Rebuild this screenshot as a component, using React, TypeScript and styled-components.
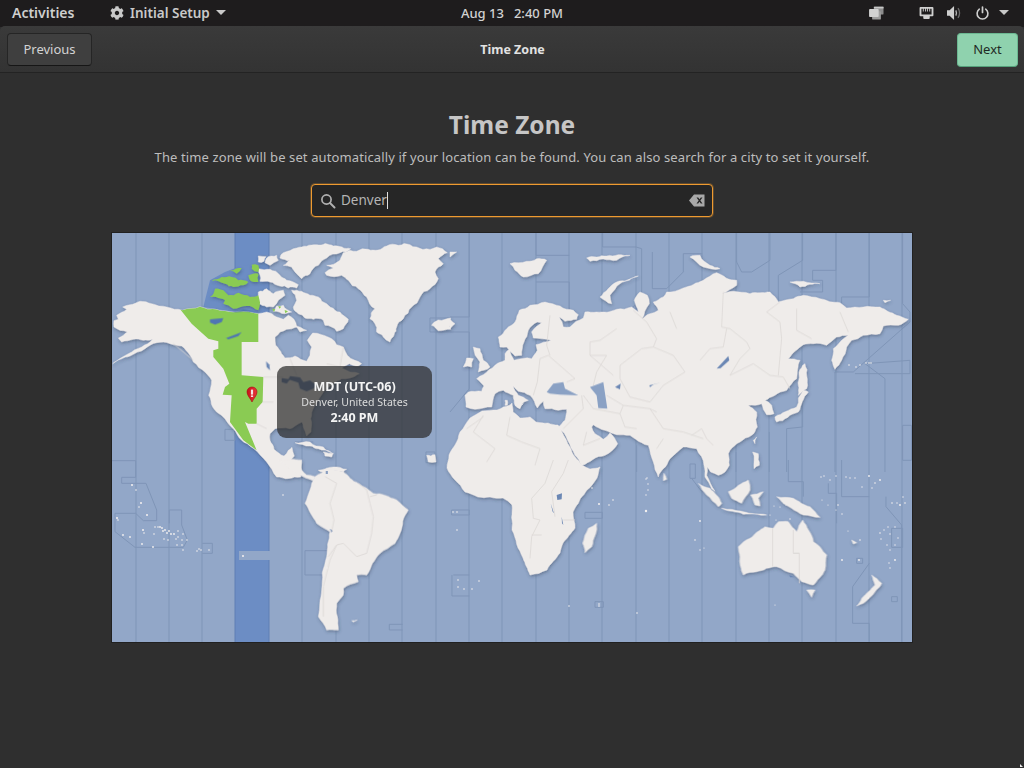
import React from "react";
import styled, { createGlobalStyle } from "styled-components";
import { FaCog } from "react-icons/fa";

const Global = createGlobalStyle`
  html, body { margin: 0; padding: 0; background: #2f2f2f; }
  body { font-family: "Noto Sans", "Open Sans", sans-serif; overflow: hidden; }
`;

const Page = styled.div`
  position: relative; width: 1024px; height: 768px; display: flex; flex-direction: column; background: #2f2f2f; overflow: hidden;
`;
const TopBar = styled.header`
  height: 27px; flex: none; box-sizing: border-box; padding-bottom: 2px; background: #1e1c1d; color: #cfcfcf; display: grid;
  grid-template-columns: 1fr auto 1fr; align-items: center;
  font-size: 14px; font-weight: 600;
`;
const TopLeft = styled.div`display: flex; align-items: center; padding-left: 12px;`;
const Activities = styled.span`width: 98px;`;
const AppMenu = styled.span`display: flex; align-items: center; gap: 6px; color: #c9c9c9; font-size: 13.5px;`;
const Clock = styled.div`display: flex; gap: 10px; font-size: 13px; font-weight: 500; color: #d2d2d2;`;
const TopRight = styled.div`display: flex; align-items: center; justify-content: flex-end; padding-right: 15px; color: #c8c8c8;`;
const Tray = styled.span<{ $gap?: number }>`display: flex; margin-right: ${p => p.$gap ?? 0}px;`;
const Caret = styled.span`
  width: 0; height: 0; border-left: 5px solid transparent; border-right: 5px solid transparent;
  border-top: 5px solid currentColor; display: block;
`;
const HeaderBar = styled.div`
  height: 46px; flex: none; display: grid; grid-template-columns: 1fr auto 1fr; align-items: start;
  padding: 0 6px 0 7px; background: linear-gradient(#3a3a3a, #333333); border-radius: 5px 5px 0 0;
  margin-top: -1px; border-bottom: 1px solid #232323; box-sizing: content-box;
`;
const Title = styled.div`color: #e2e2e2; font-size: 12.5px; line-height: 46px; font-weight: 700; margin-top: 1px;`;
const PrevButton = styled.button`
  justify-self: start; margin-top: 7px; width: 85px; height: 33px; border: 1px solid #252525; border-bottom-color: #161616; border-radius: 4px;
  background: #3f3f3f; color: #d3d3d3; font: 400 13px "Noto Sans", sans-serif; padding: 0 0 2px;
`;
const NextButton = styled.button`
  justify-self: end; margin-top: 7px; width: 61px; height: 34px; border: 1px solid #6cb892; border-bottom-color: #55a17b; border-radius: 4px;
  background: #8fd2ae; color: #1f2a25; font: 400 13px "Noto Sans", sans-serif; padding: 0 0 2px;
`;
const Main = styled.main`
  flex: 1; display: flex; flex-direction: column; align-items: center; padding-top: 33px; background: #2f2f2f;
`;
const Heading = styled.h1`
  margin: 0; font-size: 24.5px; line-height: 38px; font-weight: 700; color: #c6c6c6;
`;
const Sub = styled.p`
  margin: 3px 0 0; font-size: 13px; line-height: 20px; color: #bdbdbd; letter-spacing: 0.115px;
`;
const SearchBox = styled.div`
  margin-top: 17px; width: 402px; height: 33px; box-sizing: border-box; border: 1px solid #ee9a30; border-radius: 4px;
  background: #262626; display: flex; align-items: center; padding: 0 7px 0 8px; color: #b3b3b3;
  box-shadow: 0 0 0 1px rgba(238,154,48,.25);
`;
const SearchText = styled.span`
  margin-left: 5px; flex: 1; font-size: 13.5px; color: #b5b5b5; display: flex; align-items: center; padding-bottom: 1px;
`;
const Cursor = styled.i`display: inline-block; width: 1px; height: 17px; background: #e0e0e0;`;
const MapFrame = styled.div`
  position: relative; margin-top: 16px; width: 800px; height: 409px; background: #92a7c8;
  box-shadow: 0 0 0 1px rgba(0,0,0,.28);
`;
const MapSvg = styled.svg`display: block; width: 800px; height: 409px;`;
const ZoneLine = styled.path`fill: none; stroke: #7f95b7; stroke-width: 1; vector-effect: non-scaling-stroke;`;
const Band = styled.path`fill: #6c8dc4;`;
const BandLine = styled.path`fill: none; stroke: #5f7fb4; stroke-width: 1; vector-effect: non-scaling-stroke;`;
const OceanPatch = styled.path`fill: #92a7c8;`;
const Land = styled.path`fill: #efecea; stroke: #efecea; stroke-width: .4; stroke-linejoin: round; vector-effect: non-scaling-stroke;`;
const Zone = styled.path`fill: #8acb53;`;
const Water = styled.path`fill: #6b87b4;`;
const Sea = styled.path`fill: #8aa1c4;`;
const ZoneWater = styled.path`fill: #4f75b3;`;
const Border = styled.path`fill: none; stroke: #dcd8d6; stroke-width: .8; stroke-linejoin: round; vector-effect: non-scaling-stroke;`;
const Islet = styled.circle`fill: #f4f1f0;`;
const Tip = styled.div`
  position: absolute; left: 165px; top: 133px; width: 155px; height: 72px; border-radius: 9px;
  background: rgba(45,45,45,.72); color: #f2f2f2; display: flex; flex-direction: column; align-items: center; justify-content: center;
`;
const TipStrong = styled.div`font-size: 12.5px; line-height: 16px; font-weight: 700; color: #f4f4f4;`;
const TipLight = styled.div`font-size: 10.6px; line-height: 15px; color: #dcdcdc;`;
const Pointer = styled.svg`position: absolute; left: 1020px; top: 764px;`;

/* Midpoint displacement: turns the hand-traced outlines into coast-like edges. */
const noise = (x: number, y: number) => {
  const s = Math.sin(x * 12.9898 + y * 78.233) * 43758.5453;
  return s - Math.floor(s);
};
type Pt = [number, number];
const split = (a: Pt, b: Pt, min: number, amp: number): Pt[] => {
  const dx = b[0] - a[0], dy = b[1] - a[1];
  const len = Math.hypot(dx, dy);
  if (len < min) return [a];
  const k = (noise(a[0] + b[0], a[1] + b[1]) - 0.5) * amp;
  const m: Pt = [(a[0] + b[0]) / 2 - dy * k, (a[1] + b[1]) / 2 + dx * k];
  return [...split(a, m, min, amp), ...split(m, b, min, amp)];
};
const rough = (d: string, min = 9, amp = 0.24): string => {
  const n = (d.match(/-?\d+(\.\d+)?/g) || []).map(Number);
  const pts: Pt[] = [];
  for (let i = 0; i < n.length; i += 2) pts.push([n[i], n[i + 1]]);
  const out: Pt[] = [];
  pts.forEach((p, i) => out.push(...split(p, pts[(i + 1) % pts.length], min, amp)));
  return "M" + out.map(p => `${p[0].toFixed(1)},${p[1].toFixed(1)}`).join("L") + "Z";
};

const vLines = [136, 169, 202, 302, 336, 369, 402, 436, 469, 502, 536, 569, 602, 636, 669, 702, 736, 769, 802, 836, 869, 902];

const zoneZ5 = [
  "M258,0V70H358 M258,150H358V260", "M458,0V45H558L575,50V200L545,230", "M607,60V170H650L700,120V65H757",
  "M860,0V90L875,120H905L960,85V0", "M1058,0V85L985,130V205", "M1158,0V115H1088V145H1118V180H1050",
  "M1258,0V195H1175V215", "M1358,0V215L1380,240V270L1210,420H1155V720", "M1245,395L1380,385V425H1215",
  "M1245,395L1305,440V720", "M1010,720V590L1058,585V500", "M58,0V255H0 M58,300V470L0,540 M0,300H58",
  "M1358,580H1385V685H1358V580", "M958,720V600 M858,720V660 M560,720V640",
];
const zoneZ6 = [
  "M5,2H77V52H35V70H108L140,150V182H100L77,160H15V215L75,262H220L232,240L215,195V150H178V190",
  "M277,250H307V280H277", "M585,272H660 M585,272V345H645", "M1030,345H1078 M1026,345V408H1078",
  "M1025,150H1078V165H1025Z", "M838,493H878 M838,493V510H878", "M5,685H77V545", "M5,580H77",
];
const zoneZ7 = [
  "M225,157H277V175H225Z", "M255,425H280V442H255Z", "M540,12H556V55L540,55Z", "M545,55L575,95", "M1040,295H1058V310H1040Z",
  "M1145,410H1162V425H1145Z", "M1078,310L1028,380V490H1078V545", "M1128,110V140L1175,195V545", "M995,0V110H1078",
  "M1145,205H1178V262H1145Z", "M955,70V100H980V190", "M835,0V65H880V110",
];

const mainland = rough("M12,266L25,262L20,250L50,232L38,225L60,218L90,208L125,215L170,225L217,235L270,224L300,232L360,240L445,245L470,240L500,255L520,262L535,250L552,262L560,285L530,292L510,300L495,315L497,340L515,365L525,378L555,372L590,388L600,370L605,345L592,325L608,303L635,308L665,320L680,338L700,345L712,370L735,385L755,395L745,402L718,395L695,408L720,420L748,425L720,438L695,440L670,455L640,480L625,505L612,525L602,560L603,600L590,612L580,585L576,570L555,582L540,590L515,588L495,590L480,605L480,625L492,652L522,672L535,655L546,646L553,672L540,688L525,695L550,706L572,712L572,735L500,735L470,690L432,650L412,635L395,625L370,590L345,560L320,540L308,525L296,490L305,445L285,420L250,390L240,370L215,342L180,335L140,332L105,350L60,372L8,395L55,365L95,345L128,322L100,325L70,322L35,330L25,318L52,300L12,285Z", 14, 0.16);
const naLand = [
  "M520,62L560,48L620,38L670,42L722,50L690,62L650,78L625,100L600,125L575,140L560,125L545,105L520,100L540,85L510,78Z",
  "M470,78L500,70L505,85L480,100L465,92Z", "M445,72L468,74L462,88L445,90Z",
  "M445,110L480,112L510,130L530,145L565,158L560,168L510,162L480,150L450,148Z",
  "M545,175L575,178L600,190L625,195L650,215L675,235L690,240L715,262L700,290L680,298L665,285L645,280L640,265L610,262L585,258L565,245L550,225L560,205Z",
  "M445,180L470,170L490,185L520,175L525,190L505,205L490,225L470,225L445,215Z",
  "M520,220L545,240L525,245L490,238L500,222Z", "M555,280L590,295L570,300Z",
  "M645,122L670,108L650,100L690,85L700,62L740,58L775,52L830,42L900,38L980,45L1012,62L985,80L1000,95L975,120L985,140L960,170L930,195L905,225L880,260L860,285L840,330L820,315L800,300L795,275L780,260L795,230L770,195L745,170L715,145L695,130L650,130Z",
  "M965,280L985,264L1022,258L1022,292L985,296Z",
  "M555,632L600,630L640,645L665,662L625,650L600,642Z", "M640,660L670,664L665,675L645,672Z", "M950,670L975,668L978,690L955,690Z",
  "M625,715L670,705L710,712L700,720L640,720Z",
].map(d => rough(d, 12, 0.28));
const naGreenIsles = [
  "M305,148L335,135L365,135L385,145L415,150L400,160L370,165L345,155Z",
  "M300,195L315,170L340,175L355,190L385,182L420,195L445,190L445,235L410,222L370,230L340,215L345,205L318,195Z",
  "M360,115L395,108L380,125Z", "M425,98L445,100L445,120L425,110Z", "M415,130L445,125L445,150L420,145Z",
  "M486,230L496,232L492,240Z", "M505,222L514,224L508,230Z", "M524,234L534,238L526,244Z",
].map(d => rough(d, 12, 0.28));
const mdtZone = "M205,225L280,210L445,225V330H395V430L460,435L458,510L440,530V575L415,575L405,570L440,655L400,625L360,570L365,490L338,488L345,465L358,455L340,410L310,375V355L325,350V328L295,320L245,275Z";
const naWater = [
  "M540,432L570,436L580,450L600,445L620,460L610,470L590,478L570,470L565,452L535,442Z", "M515,438L540,442L530,455L515,450Z",
  "M468,388L478,398L480,415L470,405Z",
];

const eurasia = rough("M48,525L45,490L55,480L95,478L102,462L80,440L100,428L135,400L165,385L165,365L178,352L192,385L245,380L262,355L258,338L303,325L250,318L245,300L275,272L262,270L235,295L222,330L215,370L195,372L170,345L150,345L145,315L170,290L195,270L208,235L240,220L285,210L330,222L370,235L385,248L380,262L345,268L328,255L340,285L360,285L400,258L405,240L440,240L500,232L545,225L565,240L553,205L570,180L592,190L598,215L575,262L600,245L625,235L610,210L640,195L650,180L700,168L760,145L800,122L860,145L860,160L815,185L850,178L900,185L960,180L985,210L1030,200L1060,190L1110,200L1170,212L1190,228L1240,225L1290,225L1340,250L1375,262L1345,280L1300,282L1290,305L1240,310L1205,325L1190,345L1175,385L1155,412L1145,385L1150,350L1175,325L1195,310L1160,315L1130,340L1090,335L1060,338L1015,380L1050,385L1040,440L1010,475L975,490L945,505L965,520L972,545L950,548L935,515L895,520L920,540L922,585L905,610L870,630L840,655L835,665L838,700L825,720L805,730L782,720L772,705L770,730L795,778L785,770L765,735L762,700L740,650L700,645L660,680L640,710L625,735L610,690L595,640L575,632L540,610L500,608L465,595L430,578L425,585L435,605L460,622L480,603L503,635L465,670L395,700L375,670L325,585L345,565L350,532L325,535L285,530L280,508L262,528L240,490L205,478L190,462L205,490L235,505L222,510L210,525L195,520L190,490L160,475L135,485L125,525L75,532Z", 14, 0.16);
const z5Isles = [
  "M40,405L50,378L70,380L65,405Z", "M70,345L90,350L100,385L120,405L85,420L90,390Z", "M180,95L230,88L290,85L265,125L220,135L195,115Z", "M410,78L470,72L540,70L500,85L420,88Z",
  "M720,75L750,70L780,100L810,110L760,105Z", "M450,195L500,150L565,132L510,155L480,190L485,215Z", "M1020,150L1060,148L1110,155L1050,165Z", "M1300,205L1322,205L1305,212Z",
  "M1045,460L1058,400L1065,395L1070,470L1045,490Z", "M975,555L1040,525L1060,475L1075,480L1045,540L980,570Z", "M165,505L172,505L172,520L165,520Z", "M195,520L220,515L210,530Z",
  "M908,660L925,665L928,700L912,710Z", "M910,625L920,615L915,635Z", "M0,60L20,60L0,75Z", "M0,262L15,275L0,290Z",
].map(d => rough(d, 14, 0.22));
const z5Sea = [
  "M290,480L310,455L340,450L345,470L385,490L330,488L300,485Z", "M420,465L460,450L472,530L445,528L440,490Z",
];
const z5Water = [
  "M800,410L835,372L838,385L812,408Z", "M598,460L632,452L610,458L600,465Z", "M495,465L512,455L510,472Z",
];
const z7Isles = [
  "M685,260L720,235L765,200L790,205L805,185L835,185L860,215L878,180L910,245L950,285L945,330L910,375L875,365L850,340L800,320L740,335L700,345L690,290Z",
  "M890,390L915,390L905,412Z", "M260,190L245,260L225,278L218,250L235,205Z", "M655,95L715,60L720,90L695,130L665,115Z",
  "M565,70L600,85L635,130L625,140L590,105Z", "M635,145L700,155L770,165L700,163Z", "M800,110L850,115L900,140L930,172L880,165L845,145L815,125Z",
  "M722,105L760,95L745,115L750,138L735,135L728,115Z", "M1085,345L1115,370L1095,395L1060,430L1040,438L1075,395L1095,375Z", "M462,40L470,58L460,62Z",
  "M1025,240L1040,248L1030,252Z",
].map(d => rough(d, 14, 0.14));
const z6Land = [
  "M650,25L700,35L745,70L790,100L860,120L895,150L870,220L855,250L810,280L770,345L740,345L745,365L700,385L700,405L680,430L685,510L650,510L625,470L635,390L650,290L660,215L620,190L585,130L600,90L615,50Z",
  "M505,0L575,0L575,30L590,45L615,50L610,62L580,50L545,30Z", "M725,482L742,480L730,486Z",
].map(d => rough(d, 14, 0.12));

const africa = rough("M470,418L482,411L497,410L510,405L512,403L513,412L520,418L530,417L536,422L548,423L558,425L562,432L570,447L582,465L590,469L600,467L597,478L587,490L575,508L573,512L575,528L563,543L560,553L547,570L530,575L523,558L512,530L512,505L503,498L490,497L478,497L465,492L455,480L447,468L449,455L455,445L460,432Z", 4.5, 0.12);

const dots: [number, number, number][] = [
  [132,485,1],[136,490,.8],[141,503,1],[139,507,.8],[147,515,1],[117,518,1],[118,520,.8],[123,535,.9],[130,537,.9],[142,544,.9],[153,547,.9],[143,530,1],[144,533,.8],
  [155,527,.8],[158,527,.8],[160,527,.9],[162,528,.9],[163,531,.9],[165,530,.9],[167,533,.9],[169,531,.9],[171,534,.9],[174,534,.9],[178,531,.8],[178,537,.8],[183,534,.8],[182,540,.8],[187,540,.8],[176,539,.8],[164,539,.8],[168,540,.8],[177,545,.8],[182,545,.8],[183,550,.8],[154,534,.8],[199,549,.8],[197,551,.8],[201,550,.8],[209,550,.8],[243,556,1],
  [283,495,.8],[327,568,.7],[453,512,.8],[457,512,.8],[458,580,.8],[457,530,.8],[458,587,.8],[479,581,.8],[464,589,.8],[472,589,.8],[592,488,.8],[599,504,1],[609,505,.8],[613,500,.8],[646,479,.7],[648,484,.7],[648,490,.7],[646,495,.7],[647,478,.7],
  [646,511,1.2],[700,521,.9],[842,560,.9],[859,560,.9],[895,560,.9],[900,505,.9],[892,503,.8],[880,480,.9],[869,476,.9],[855,478,.7],[846,477,.7],[850,478,.7],[821,477,.7],[824,476,.7],[830,480,.7],[836,476,.7],[875,483,.8],[872,488,.7],[862,487,.7],[903,497,.7],[905,503,.8],[897,503,.7],
  [880,533,.8],[884,530,.7],[888,527,.7],[895,527,.7],[890,534,.7],[898,538,.7],[895,545,.7],[887,545,.7],[881,539,.7],[890,550,.7],[889,563,.7],[890,568,.7],[838,505,.8],[780,507,.6],[774,506,.6],[786,505,.6],[784,503,.6],[800,507,.6],[822,500,.6],[828,505,.6],[836,510,.6],[842,514,.7],[848,531,.6],[860,540,.8],[790,519,.7],[776,520,.6],[770,515,.6],
  [869,363,.8],[871,363,.8],[866,363,.8],[860,365,.8],[856,367,.8],[849,365,.8],[868,598,.8],[775,605,.6],[637,613,.8],[599,606,.8],[569,606,.8],[599,604,.8],
  [695,540,.8],[700,550,.7],[704,548,.6],
];

const App: React.FC = () => (
  <Page>
    <Global />
    <TopBar>
      <TopLeft>
        <Activities>Activities</Activities>
        <AppMenu>
          <FaCog size={14} />
          Initial Setup
          <Caret />
        </AppMenu>
      </TopLeft>
      <Clock><span>Aug 13</span><span>2:40 PM</span></Clock>
      <TopRight>
        <Tray $gap={34}>
          <svg width="17" height="14" viewBox="0 0 17 16">
            <rect x="5.5" y="0.8" width="11" height="9" rx="1" fill="#8d8d8d" />
            <rect x="5.5" y="0.8" width="11" height="2" fill="#c8c8c8" />
            <rect x="3.5" y="6" width="10" height="9.5" rx="1" fill="#9e9e9e" />
            <rect x="0" y="3.5" width="11" height="9" rx="1" fill="#d2d2d2" />
          </svg>
        </Tray>
        <Tray $gap={13}>
          <svg width="15" height="12" viewBox="0 0 15 13">
            <path fill="#d0d0d0" fillRule="evenodd" d="M1,0H14Q15,0 15,1V9Q15,10 14,10H11V12Q11,13 10,13H5Q4,13 4,12V10H1Q0,10 0,9V1Q0,0 1,0ZM2,2V8H13V2H11.5V5H10.5V2H9V5H8V2H7V5H6V2H4.5V5H3.5V2Z" />
          </svg>
        </Tray>
        <Tray $gap={14}>
          <svg width="15" height="16" viewBox="0 0 17 16">
            <path fill="#cfcfcf" d="M0,5H3L8,0V16L3,11H0Z" />
            <path fill="none" stroke="#b8b8b8" strokeWidth="1.5" d="M10,5Q11.5,8 10,11" />
            <path fill="none" stroke="#6a6a6a" strokeWidth="1.5" d="M12.5,2.5Q16,8 12.5,13.5" />
          </svg>
        </Tray>
        <Tray $gap={10}>
          <svg width="13" height="14" viewBox="0 0 13 14">
            <path fill="none" stroke="#cfcfcf" strokeWidth="1.6" strokeLinecap="round" d="M3.3,3.2A5.4,5.4 0 1 0 9.7,3.2" />
            <path stroke="#cfcfcf" strokeWidth="1.7" strokeLinecap="round" d="M6.5,1V6.5" />
          </svg>
        </Tray>
        <Caret />
      </TopRight>
    </TopBar>
    <HeaderBar>
      <PrevButton>Previous</PrevButton>
      <Title>Time Zone</Title>
      <NextButton>Next</NextButton>
    </HeaderBar>
    <Main>
      <Heading>Time Zone</Heading>
      <Sub>The time zone will be set automatically if your location can be found. You can also search for a city to set it yourself.</Sub>
      <SearchBox>
        <svg width="16" height="16" viewBox="0 0 16 16">
          <circle cx="6.5" cy="6.5" r="4.6" fill="none" stroke="#b0b0b0" strokeWidth="1.7" />
          <path d="M10,10L14.5,14.5" stroke="#b0b0b0" strokeWidth="2" strokeLinecap="round" />
        </svg>
        <SearchText>Denver<Cursor /></SearchText>
        <svg width="16" height="13" viewBox="0 0 16 13">
          <path fillRule="evenodd" fill="#a8a8a8" d="M5,0.5H15.5V12.5H5L0,6.5ZM7.5,3.5L9.7,6.5L7.5,9.5H9.2L10.5,7.7L11.8,9.5H13.5L11.3,6.5L13.5,3.5H11.8L10.5,5.3L9.2,3.5Z" />
        </svg>
      </SearchBox>
      <MapFrame>
        <MapSvg viewBox="112 233 800 409">
          <defs>
            <filter id="landShadow" x="-5%" y="-5%" width="110%" height="110%">
              <feGaussianBlur in="SourceGraphic" stdDeviation="0.3" result="soft" />
              <feDropShadow in="soft" dx="0.6" dy="1.6" stdDeviation="1.4" floodColor="#2c3a52" floodOpacity="0.42" />
            </filter>
            <linearGradient id="pinFill" x1="0" x2="1" y1="0" y2="0">
              <stop offset="0" stopColor="#c8121a" />
              <stop offset="1" stopColor="#e8343a" />
            </linearGradient>
            <clipPath id="mainlandClip"><path d={mainland} /></clipPath>
          </defs>
          <Band d="M235,233H269V551H239V560H269V642H235Z" />
          <OceanPatch d="M239,551H269V560H239Z" />
          <BandLine d="M235,233V642 M269,233V551 M269,560V642" />
          {vLines.map(x => <ZoneLine key={x} d={`M${x},233V642`} />)}
          <g transform="translate(110 232) scale(.3333)">
            <Band d="M300,145L345,120L385,105L445,92V250L280,225Z" />
            <ZoneLine d="M445,72H475V100 M960,258H1020M960,258V300H1020 M345,592H375V625H345Z M948,660H975V692H948Z M555,630H610" />
          </g>
          <g transform="translate(450 232) scale(.3333)">
            {zoneZ5.map(d => <ZoneLine key={d} d={d} />)}
          </g>
          <g transform="translate(110 460) scale(.3333)">
            {zoneZ6.map(d => <ZoneLine key={d} d={d} />)}
          </g>
          <g transform="translate(510 460) scale(.3333)">
            {zoneZ7.map(d => <ZoneLine key={d} d={d} />)}
          </g>
          <g filter="url(#landShadow)">
            <g transform="translate(110 232) scale(.3333)">
              <Land d={mainland} />
              {naLand.map(d => <Land key={d} d={d} />)}
              <Zone d={mdtZone} clipPath="url(#mainlandClip)" />
              {naGreenIsles.map(d => <Zone key={d} d={d} />)}
            </g>
            <g transform="translate(450 232) scale(.3333)">
              <Land d={eurasia} />
              {z5Isles.map(d => <Land key={d} d={d} />)}
            </g>
            <Land d={africa} />
            <g transform="translate(110 460) scale(.3333)">
              {z6Land.map(d => <Land key={d} d={d} />)}
            </g>
            <g transform="translate(510 460) scale(.3333)">
              {z7Isles.map(d => <Land key={d} d={d} />)}
            </g>
          </g>
          <g transform="translate(110 232) scale(.3333)">
            {naWater.map(d => <Water key={d} d={d} />)}
            <ZoneWater d="M300,262L340,258L335,270L315,278L300,272Z M348,318L395,300L385,312L355,322Z M445,240L400,232L365,242L400,238Z" />
            <Border d="M700,345L690,405L650,395 M250,385L190,335 M540,380L560,430 M460,435H520 M458,510H490 M440,575L470,590" />
          </g>
          <g transform="translate(450 232) scale(.3333)">
            {z5Sea.map(d => <Sea key={d} d={d} />)}
            {z5Water.map(d => <Water key={d} d={d} />)}
            <Border d="M270,380L262,450L250,490 M270,380L295,370L375,440L350,450 M300,250L290,340L300,370 M500,290L450,325L420,330L420,370L470,370L440,420L430,460 M510,400L575,350L610,345L670,370L705,420L640,460L600,510L540,495L510,440Z M550,235L590,270L620,320L610,345 M680,290L660,240 M820,180L815,285L840,290L890,330L900,350L870,380L840,430L910,395L960,430L1000,435L1020,470 M990,210L950,240L990,270L995,320L985,430 M1040,230L1040,295L1085,320 M1170,240L1195,300 M750,385L780,350L820,345L830,290 M470,490L520,520L600,530L640,590L700,600L760,620 M420,370L490,430 M400,490L430,530L510,545L525,585L560,590 M520,520L510,545 M600,530L620,540 M725,610L755,590L770,620 M770,620L790,640 M100,555L50,590 M180,555L170,610L215,630L270,650L255,700 M100,550L70,600L135,650L110,690 M395,490L400,530L340,590 M410,600L400,640L450,620 M620,650L640,620" />
          </g>
          <g transform="translate(110 460) scale(.3333)">
            <Water d="M648,33L653,33L653,42L648,42Z M660,206L668,212L664,218Z" />
            <Border d="M645,50L680,70L660,130L672,180L665,215 M745,70L770,90L780,130L790,170L785,220L770,280L740,290L700,250L680,255L660,300L640,380L640,470 M780,110L800,105 M680,255L655,290" />
          </g>
          <g transform="translate(510 460) scale(.3333)">
            <Water d="M140,105L156,100L155,118L142,120Z M122,130L132,160L128,155Z M155,170L160,195L156,190Z M838,345L855,352L840,352Z" />
            <Border d="M788,205V320 M850,210V280H868V370 M850,280H868 M130,0L105,70L65,115L70,175L90,180L65,230L60,295 M65,225H95 M160,180H195 M175,0L160,40L125,95L135,170" />
          </g>
          {dots.map(([cx, cy, r]) => <Islet key={`${cx}-${cy}`} cx={cx} cy={cy} r={r} />)}
          <g transform="translate(247 387)">
            <path d="M5,0C8,0 10,2.2 10,5C10,8.5 6.5,11.5 5,15C3.5,11.5 0,8.5 0,5C0,2.2 2,0 5,0Z" fill="url(#pinFill)" stroke="#a50e14" strokeWidth=".6" />
            <rect x="3.9" y="2.6" width="2.2" height="5" fill="#f3e3e3" />
            <rect x="3.9" y="8.4" width="2.2" height="1.6" fill="#f3e3e3" />
          </g>
        </MapSvg>
        <Tip>
          <TipStrong>MDT (UTC-06)</TipStrong>
          <TipLight>Denver, United States</TipLight>
          <TipStrong>2:40 PM</TipStrong>
        </Tip>
      </MapFrame>
    </Main>
    <Pointer width="4" height="4" viewBox="0 0 4 4"><path d="M0,0L3,3H0Z" fill="#eee" /></Pointer>
  </Page>
);

export default App;
